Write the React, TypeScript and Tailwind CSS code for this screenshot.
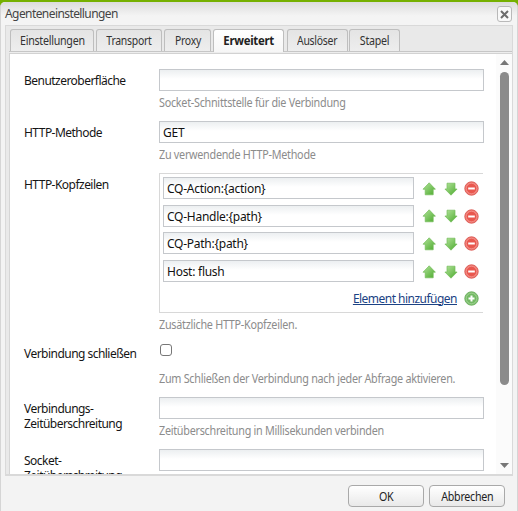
import React from 'react';

const tabs = [
  { label: 'Einstellungen', box: 'w-[84px] mr-[2px]', text: 'tracking-[-0.3px] scale-x-[0.89]' },
  { label: 'Transport', box: 'w-[66px] mr-[2px]', text: 'tracking-[-0.3px] scale-x-[0.87]' },
  { label: 'Proxy', box: 'w-[47px] mr-[2px]', text: 'tracking-[-0.3px] scale-x-[0.87]' },
  { label: 'Erweitert', box: 'w-[71px] mr-[3px]', text: 'tracking-[-0.3px] scale-x-[0.95]', active: true },
  { label: 'Auslöser', box: 'w-[61px] mr-[1px]', text: 'tracking-[-0.3px] scale-x-[0.87]' },
  { label: 'Stapel', box: 'w-[51px]', text: 'tracking-[-0.3px] scale-x-[0.89]' },
];

const headers = ['CQ-Action:{action}', 'CQ-Handle:{path}', 'CQ-Path:{path}', 'Host: flush'];

function Field({ value = '', className }: { value?: string; className: string }) {
  return (
    <div
      className={`box-border h-[22px] border border-[#c5c8cc] bg-linear-to-b from-[#eceff1] to-white to-45% pl-[3px] leading-[21px] tracking-[-0.26px] whitespace-pre text-[#111] ${className}`}
    >
      {value}
    </div>
  );
}

function Arrow({ down = false }: { down?: boolean }) {
  return (
    <svg width="14" height="14" viewBox="0 0 14 14">
      <defs>
        <linearGradient id={down ? 'ad' : 'au'} x1="0" y1="0" x2="1" y2="1">
          <stop offset="0" stopColor="#b4e49c" />
          <stop offset="1" stopColor="#4aa92c" />
        </linearGradient>
      </defs>
      <path
        d={down ? 'M7 13.2 L.9 7 H3 V1.2 H11 V7 H13.1 Z' : 'M7.2 .8 L13.4 7.2 H11.2 V12.8 H3.2 V7.2 H1 Z'}
        fill={down ? 'url(#ad)' : 'url(#au)'}
        stroke="#72bb59"
        strokeWidth=".7"
        strokeLinejoin="round"
      />
    </svg>
  );
}

function Round({ plus = false }: { plus?: boolean }) {
  return (
    <svg width="15" height="15" viewBox="0 0 15 15">
      <circle cx="7.5" cy="7.5" r="6.7" fill={plus ? '#86c577' : '#f07e77'} stroke={plus ? '#69ad5b' : '#d9564f'} strokeWidth=".9" />
      <circle cx="7.5" cy="7.5" r="5.2" fill={plus ? '#73b964' : '#e9574e'} stroke={plus ? '#a3d396' : '#f39791'} strokeWidth=".7" />
      <path d={plus ? 'M4.5 7.5h6M7.5 4.5v6' : 'M4.2 7.5h6.6'} stroke="#fff" strokeWidth="2" />
    </svg>
  );
}

function Label({ children }: { children: React.ReactNode }) {
  return <div className="w-[135px] shrink-0 pt-[5px] leading-[14.5px] tracking-[-0.53px] text-[#151515]">{children}</div>;
}

function Help({ children, className = '' }: { children: React.ReactNode; className?: string }) {
  return (
    <div className={`mt-[4px] h-[16px] leading-[16px] whitespace-nowrap text-[#8c8c8c] ${className}`}>
      <span className="inline-block origin-left scale-x-[0.9] tracking-[-0.3px]">{children}</span>
    </div>
  );
}

export default function App() {
  return (
    <div className="h-[511px] w-[518px] overflow-hidden bg-[#75b000] pt-[2px] font-['Noto_Sans','Open_Sans',sans-serif] text-[12px] text-[#333]">
      <div className="flex h-[509px] flex-col rounded-t-[5px] border-x border-[#d5d5d5] bg-[#f3f3f3]">
        <div className="flex h-[23px] shrink-0 justify-between rounded-t-[5px] bg-linear-to-b from-[#dcdcdc] to-[#f4f4f4] to-60% pl-[4px]">
          <span className="leading-[24px] tracking-[-0.58px] text-[#444]">Agenteneinstellungen</span>
          <div className="mt-[4px] mr-[5px] flex h-[16px] w-[15px] items-center justify-center rounded-[3px] border border-[#b9b9b9] bg-[#f8f8f8]">
            <svg width="9" height="9" viewBox="0 0 9 9">
              <path d="M1 1l7 7M8 1L1 8" stroke="#6c6c6c" strokeWidth="2" />
            </svg>
          </div>
        </div>
        <div className="ml-[4px] flex h-[451px] w-[508px] shrink-0 flex-col border border-b-2 border-[#d9d9d9] bg-[#e9e9e9]">
          <div className="ml-[3px] flex h-[26px] shrink-0 items-end border-b border-[#c6c6c6] pl-px">
            {tabs.map((t) => (
              <div
                key={t.label}
                className={`flex shrink-0 justify-center rounded-t-[3px] border border-b-0 border-[#bebebe] leading-[22px] whitespace-nowrap ${
                  t.active ? '-mb-px h-[23px] bg-linear-to-b from-white to-[#f6f6f6] font-bold text-[#222]' : 'h-[22px] bg-linear-to-b from-[#e4e4e4] to-[#eeeeee]'
                } ${t.box}`}
              >
                <span className={t.text}>{t.label}</span>
              </div>
            ))}
          </div>
          <div className="ml-[3px] h-[2px] shrink-0 border-b border-[#d2d2d2] bg-[#ededed]" />
          <div className="ml-[3px] flex h-[420px] shrink-0 overflow-hidden border-l border-[#d5d5d5] bg-white">
            <div className="h-[420px] w-[486px] shrink-0 overflow-hidden pt-[15px] pl-[14px]">
              <div className="flex h-[52px]">
                <Label>Benutzeroberfläche</Label>
                <div>
                  <Field className="w-[325px]" />
                  <Help>Socket-Schnittstelle für die Verbindung</Help>
                </div>
              </div>
              <div className="flex h-[52px]">
                <Label>HTTP-Methode</Label>
                <div>
                  <Field value="GET" className="w-[325px]" />
                  <Help>Zu verwendende HTTP-Methode</Help>
                </div>
              </div>
              <div className="flex h-[168px]">
                <Label>HTTP-Kopfzeilen</Label>
                <div>
                  <div className="h-[140px] w-[324px] border border-r-0 border-[#d8d8d8] pt-[3px] pl-[3px]">
                    {headers.map((h) => (
                      <div key={h} className="flex h-[27.7px] items-start">
                        <Field value={h} className="w-[251px]" />
                        <div className="flex h-[23px] items-center pl-[7.5px]">
                          <Arrow />
                          <span className="w-[8.5px]" />
                          <Arrow down />
                          <span className="w-[6px]" />
                          <Round />
                        </div>
                      </div>
                    ))}
                    <div className="flex h-[22px] items-center justify-end pr-[4px]">
                      <span className="mr-[7px] tracking-[-0.52px] text-[#1b4284] underline">Element hinzufügen</span>
                      <Round plus />
                    </div>
                  </div>
                  <Help>Zusätzliche HTTP-Kopfzeilen.</Help>
                </div>
              </div>
              <div className="flex h-[56px]">
                <div className="pt-px">
                  <Label>Verbindung schließen</Label>
                </div>
                <div className="pt-[3px]">
                  <div className="ml-px h-[12px] w-[12px] rounded-[3px] border border-[#777] bg-white" />
                  <Help className="mt-[15px]">Zum Schließen der Verbindung nach jeder Abfrage aktivieren.</Help>
                </div>
              </div>
              <div className="flex h-[52px]">
                <Label>Verbindungs-<br />Zeitüberschreitung</Label>
                <div>
                  <Field className="w-[325px]" />
                  <Help>Zeitüberschreitung in Millisekunden verbinden</Help>
                </div>
              </div>
              <div className="flex h-[52px]">
                <Label>Socket-<br />Zeitüberschreitung</Label>
                <Field className="w-[325px]" />
              </div>
            </div>
            <div className="flex w-[16px] flex-col items-center bg-[#fbfbfb] pt-[6px]">
              <svg width="9" height="5" viewBox="0 0 9 5"><path d="M4.5 0L9 5H0Z" fill="#777" /></svg>
              <div className="mt-[7px] h-[313px] w-[9px] rounded-full bg-[#8b8b8b]" />
              <svg width="9" height="5" viewBox="0 0 9 5" className="mt-[78px]"><path d="M0 0H9L4.5 5Z" fill="#777" /></svg>
            </div>
          </div>
        </div>
        <div className="mr-[12px] flex justify-end gap-[5px] pt-[9px]">
          {['OK', 'Abbrechen'].map((b) => (
            <div key={b} className="h-[22px] w-[76px] rounded-[4px] border border-[#a9a9a9] bg-linear-to-b from-white to-[#e9e9e9] text-center leading-[22px] tracking-[-0.3px] text-[#222]">
              <span className="inline-block scale-x-[0.89]">{b}</span>
            </div>
          ))}
        </div>
      </div>
    </div>
  );
}
